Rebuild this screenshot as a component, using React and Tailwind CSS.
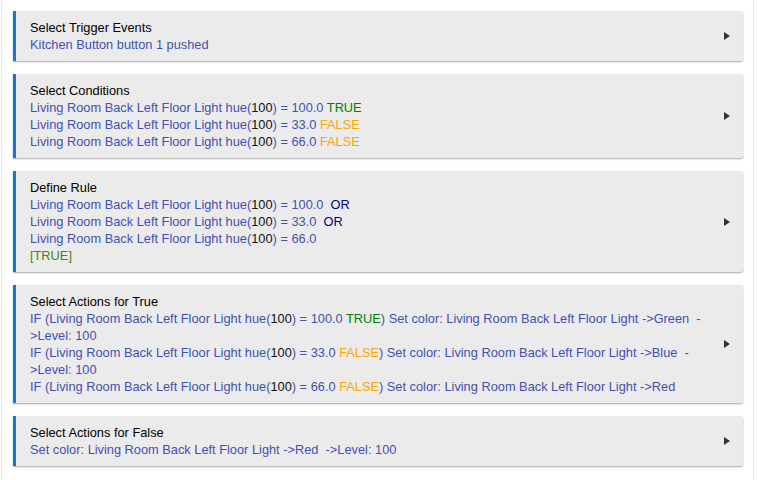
import React from 'react';

const Num = ({ children }) => <span className="text-[#111]">{children}</span>;
const True = () => <span className="text-[#008000]">TRUE</span>;
const False = () => <span className="text-[#ffa500]">FALSE</span>;
const Or = () => <span className="text-[#000080]">OR</span>;

const device = 'Living Room Back Left Floor Light';

const Hue = ({ value }) => (
  <>
    {device} hue(<Num>100</Num>) = {value}
  </>
);

const Card = ({ title, children }) => (
  <div className="flex items-center bg-[#ebebeb] border-l-[3px] border-[#1b76d2] rounded-r-[3px] shadow-[0_1px_2px_rgba(0,0,0,0.35)] pl-[14px] pr-[13px] py-[8px]">
    <div className="flex-1 min-w-0">
      <div className="text-black">{title}</div>
      <div className="text-[#3f51b5]">{children}</div>
    </div>
    <svg width="6" height="8" viewBox="0 0 6 8" className="ml-[10px] shrink-0">
      <path d="M0 0 L6 4 L0 8 Z" fill="#333" />
    </svg>
  </div>
);

const App = () => {
  return (
    <div className="min-h-[480px] bg-white">
      <div
        className="ml-px w-[753px] min-h-[480px] border-x border-[#eaeaea] pl-[11px] pr-[10px] pt-[11px] flex flex-col gap-[13px] text-[12.8px] leading-[17px]"
        style={{ fontFamily: '"Liberation Sans", Arial, sans-serif' }}
      >
        <Card title="Select Trigger Events">
          <div>Kitchen Button button 1 pushed</div>
        </Card>

        <Card title="Select Conditions">
          <div><Hue value="100.0" /> <True /></div>
          <div><Hue value="33.0" /> <False /></div>
          <div><Hue value="66.0" /> <False /></div>
        </Card>

        <Card title="Define Rule">
          <div><Hue value="100.0" />{'\u00a0 '}<Or /></div>
          <div><Hue value="33.0" />{'\u00a0 '}<Or /></div>
          <div><Hue value="66.0" /></div>
          <div className="text-[#3d8a10]">[TRUE]</div>
        </Card>

        <Card title="Select Actions for True">
          <div>
            IF (<Hue value="100.0" /> <True />) Set color: {device} -&gt;Green{'\u00a0 '}-&gt;Level: 100
          </div>
          <div>
            IF (<Hue value="33.0" /> <False />) Set color: {device} -&gt;Blue{'\u00a0 '}-&gt;Level: 100
          </div>
          <div>
            IF (<Hue value="66.0" /> <False />) Set color: {device} -&gt;Red
          </div>
        </Card>

        <Card title="Select Actions for False">
          <div>Set color: {device} -&gt;Red{'\u00a0 '}-&gt;Level: 100</div>
        </Card>
      </div>
    </div>
  );
};

export default App;
